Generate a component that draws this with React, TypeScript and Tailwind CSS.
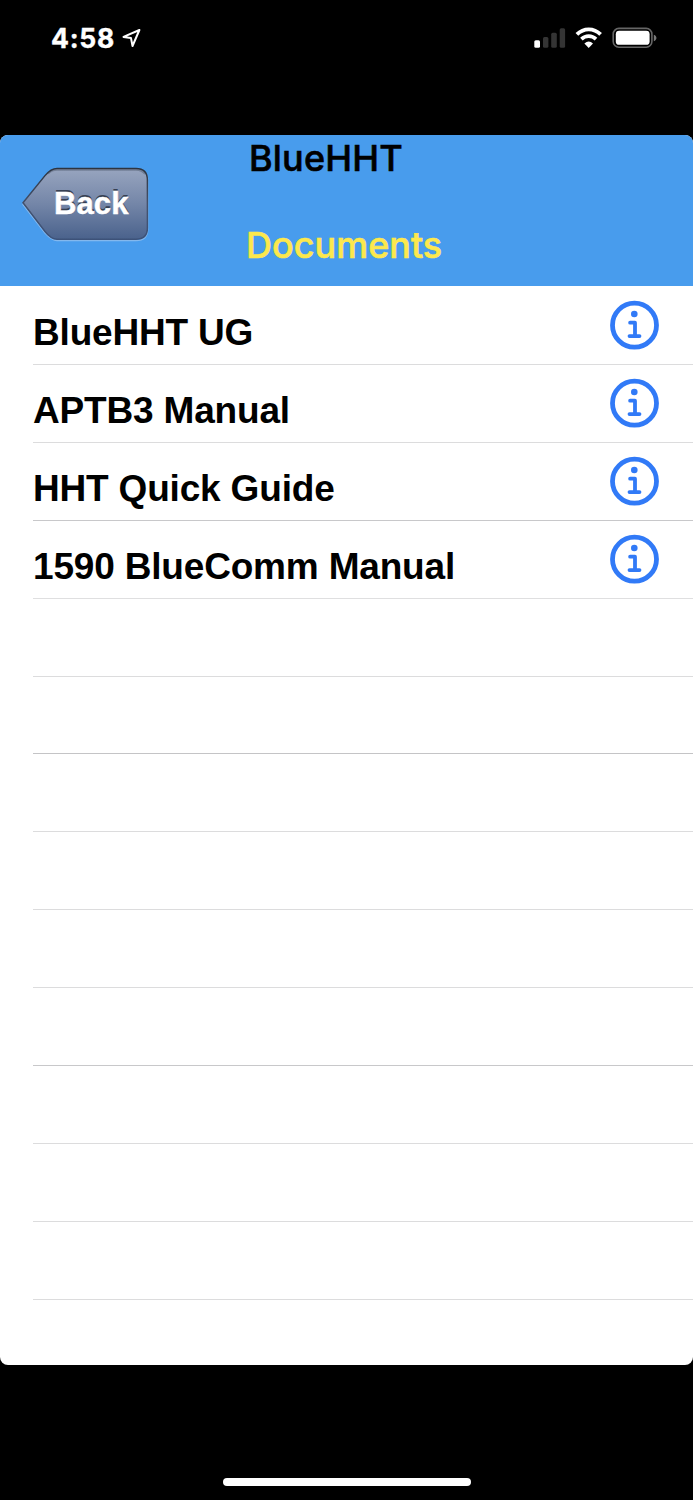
const rows = [
  { label: 'BlueHHT UG', box: 'h-[79px] border-[#dcdcdd]', text: 'mt-[26px]', icon: 'mt-[14px]' },
  { label: 'APTB3 Manual', box: 'h-[78px] border-[#dcdcdd]', text: 'mt-[25px]', icon: 'mt-[13px]' },
  { label: 'HHT Quick Guide', box: 'h-[78px] border-[#c8c8ca]', text: 'mt-[25px]', icon: 'mt-[13px]' },
  { label: '1590 BlueComm Manual', box: 'h-[78px] border-[#dfdfe0]', text: 'mt-[25px]', icon: 'mt-[13px]' },
  { label: '', box: 'h-[78px] border-[#dcdcdd]' },
  { label: '', box: 'h-[77px] border-[#c4c4c6]' },
  { label: '', box: 'h-[78px] border-[#dcdcdd]' },
  { label: '', box: 'h-[78px] border-[#dcdcdd]' },
  { label: '', box: 'h-[78px] border-[#dcdcdd]' },
  { label: '', box: 'h-[78px] border-[#c8c8ca]' },
  { label: '', box: 'h-[78px] border-[#dcdcdd]' },
  { label: '', box: 'h-[78px] border-[#dcdcdd]' },
  { label: '', box: 'h-[78px] border-[#dcdcdd]' },
];

function InfoIcon({ className = '' }: { className?: string }) {
  return (
    <svg className={`mr-[34px] shrink-0 ${className}`} width="50" height="50" viewBox="0 0 50 50" fill="none" stroke="#317af7">
      <circle cx="25.5" cy="25.2" r="22" strokeWidth="4.8" />
      <circle cx="25.3" cy="14" r="3.3" fill="#317af7" stroke="none" />
      <path d="M21.1 22.7H26V36M20.5 36.1H30.5" strokeWidth="3.8" strokeLinecap="round" strokeLinejoin="round" />
    </svg>
  );
}

function StatusBar() {
  return (
    <div className="flex h-[135px] items-start justify-between pl-[51px] pr-[36px] pt-[20px]">
      <div className="flex">
        <span className="w-[71px] whitespace-nowrap text-[26.5px] font-bold leading-[36px] tracking-[0.8px] text-white [-webkit-text-stroke:0.4px_white]">4:58</span>
        <svg className="mt-[8px]" width="20" height="20" viewBox="0 0 20 20" fill="none">
          <path d="M17.4 2L1.5 8.9L9 10.1L10.5 18L17.4 2Z" stroke="white" strokeWidth="2" strokeLinejoin="round" />
        </svg>
      </div>
      <svg className="mt-[6px]" width="124" height="26" viewBox="533 26 124 26">
        <rect x="534.3" y="40.2" width="5.7" height="7.6" rx="1.5" fill="white" />
        <rect x="543" y="37" width="5.4" height="10.8" rx="1.5" fill="#343434" />
        <rect x="551.2" y="32.7" width="5.6" height="15.1" rx="1.5" fill="#343434" />
        <rect x="559.7" y="28.2" width="5.4" height="19.6" rx="1.5" fill="#343434" />
        <g fill="none" stroke="white">
          <path d="M576.9 34.4C583.6 27.6 593.8 27.6 600.6 34.4" strokeWidth="3.8" />
          <path d="M581.4 39.2C585.6 35.2 591.8 35.2 596 39.2" strokeWidth="3.7" />
        </g>
        <path d="M584.4 43.4Q588.7 39.8 593 43.4L588.7 47.9Z" fill="white" />
        <rect x="613.2" y="28.4" width="38.7" height="18.8" rx="5.7" fill="none" stroke="#666" strokeWidth="1.6" />
        <rect x="615.8" y="30.8" width="33.8" height="14" rx="3.4" fill="white" />
        <path d="M653.8 34.8C657.3 36 657.3 40 653.8 41.2Z" fill="#777" />
      </svg>
    </div>
  );
}

function BackButton() {
  return (
    <button className="ml-[20px] mt-[30px] grid h-[78px] w-[131px] shrink-0">
      <svg className="col-start-1 row-start-1" width="131" height="78" viewBox="20 165 131 78">
        <defs>
          <linearGradient id="steel" x1="0" y1="0" x2="0" y2="1">
            <stop offset="0" stopColor="#98a5bf" />
            <stop offset="0.5" stopColor="#7486a8" />
            <stop offset="1" stopColor="#4a628c" />
          </linearGradient>
          <linearGradient id="edge" x1="0" y1="0" x2="0" y2="1">
            <stop offset="0" stopColor="#2d3440" />
            <stop offset="0.5" stopColor="#44516b" />
            <stop offset="1" stopColor="#3d5279" />
          </linearGradient>
        </defs>
        <path d="M23 204.5L45 177Q52 169.7 57 169.7H136Q147.7 169.7 147.7 181V229Q147.7 240.5 136 240.5H57Q52 240.5 45 233Z" fill="none" stroke="#83b8ee" strokeWidth="1.4" />
        <path d="M23 202.7L45 175.6Q51 168.4 57 168.4H136Q147.4 168.4 147.4 180V228Q147.4 239.2 136 239.2H57Q51 239.2 45 231.5Z" fill="url(#steel)" stroke="url(#edge)" strokeWidth="1.5" />
        <path d="M48 173.5Q52 169.8 57 169.8H136Q142 169.8 145 174" fill="none" stroke="#3f485b" strokeOpacity="0.4" strokeWidth="1.8" />
      </svg>
      <span className="col-start-1 row-start-1 ml-[34px] mt-[21px] text-left font-['Liberation_Sans',sans-serif] text-[31px] font-bold leading-[36px] tracking-[0.1px] text-white [-webkit-text-stroke:0.5px_white] [text-shadow:0_-2px_0_#364053]">
        Back
      </span>
    </button>
  );
}

export default function App() {
  return (
    <div className="flex h-[1500px] w-[693px] flex-col overflow-hidden bg-black font-[Inter,sans-serif]">
      <StatusBar />
      <main className="flex h-[1230px] flex-col overflow-hidden rounded-[8px] bg-white">
        <header className="flex h-[151px] shrink-0 bg-[#489ced]">
          <BackButton />
          <div className="ml-[95px] flex flex-col whitespace-nowrap text-[36px] font-medium leading-[44px]">
            <h1 className="ml-[3px] mt-[1px] tracking-[0.2px] text-black [-webkit-text-stroke:0.6px_black]">BlueHHT</h1>
            <h2 className="mt-[43px] text-[#fce84d] [-webkit-text-stroke:0.6px_#fce84d]">Documents</h2>
          </div>
        </header>
        <ul className="flex flex-col">
          {rows.map((row, i) => (
            <li key={i} className={`ml-[33px] flex shrink-0 items-start justify-between border-b ${row.box}`}>
              {row.label && (
                <>
                  <span className={`whitespace-nowrap font-['Liberation_Sans',sans-serif] text-[37px] font-bold leading-[42px] tracking-[-0.18px] text-black ${row.text}`}>
                    {row.label}
                  </span>
                  <InfoIcon className={row.icon} />
                </>
              )}
            </li>
          ))}
        </ul>
      </main>
      <div className="mt-[113px] flex justify-center">
        <div className="h-[8px] w-[248px] rounded-full bg-white" />
      </div>
    </div>
  );
}
